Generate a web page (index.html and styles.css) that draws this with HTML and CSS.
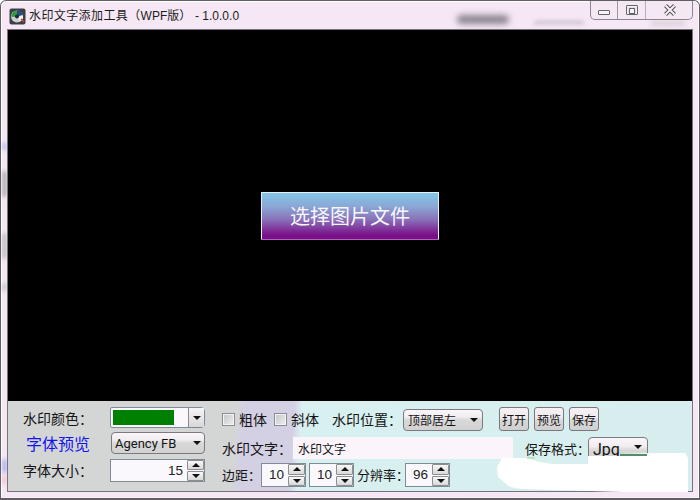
FILE: index.html
```html
<!DOCTYPE html>
<html lang="zh">
<head>
<meta charset="utf-8">
<title>水印文字添加工具</title>
<link rel="stylesheet" href="styles.css">
</head>
<body>
<div class="window">
  <div class="smudges">
    <span class="smudge s1"></span><span class="smudge s2"></span><span class="smudge s3"></span>
    <span class="smudge s4"></span><span class="smudge s5"></span><span class="smudge s6"></span>
    <span class="smudge s7"></span><span class="smudge s8"></span><span class="smudge s9"></span>
  </div>
  <header class="titlebar">
    <svg class="app-icon" width="17" height="17" viewBox="0 0 17 17">
      <rect x="0.5" y="0.5" width="16" height="16" rx="2" fill="#3c4044"/>
      <circle cx="8" cy="8.5" r="6" fill="#c9d0d4"/>
      <path d="M2.500 9a6 6 0 0 1 5.500-6.500V8.500z" fill="#2f9a3e"/>
      <path d="M8 2.500a6 6 0 0 1 6 4.500L8 8.500z" fill="#23507e"/>
      <path d="M8 8.500l6-1a6 6 0 0 1-3 6z" fill="#f2f2f2"/>
      <circle cx="8" cy="8.500" r="2" fill="#24282c"/>
      <path d="M12 11l3 3" stroke="#c84a3a" stroke-width="1.500"/>
    </svg>
    <span class="title-text"><span class="title-cjk">水印文字添加工具（</span>WPF版<span class="title-cjk">）</span> - 1.0.0.0</span>
    <div class="caption">
      <div class="cap-btn cap-min"><span class="glyph-min"></span></div>
      <div class="cap-btn cap-max"><span class="glyph-max"></span></div>
      <div class="cap-btn cap-close">
        <svg width="14" height="12" viewBox="0 0 14 12"><path d="M2.500 1.500l9 9M11.500 1.500l-9 9" stroke="#55515a" stroke-width="4" fill="none"/><path d="M2.500 1.500l9 9M11.500 1.500l-9 9" stroke="#f6f2f6" stroke-width="2" fill="none"/></svg>
      </div>
    </div>
  </header>
  <main class="client">
    <section class="stage">
      <button class="pick-btn">选择图片文件</button>
    </section>
    <section class="panel">
      <div class="col-left">
        <div class="left-row row-a">
          <label class="lbl lbl-left">水印颜色：</label>
          <div class="color-picker">
            <div class="swatch-box"><span class="swatch"></span></div>
            <div class="picker-arrow"><span class="tri-down"></span></div>
          </div>
        </div>
        <div class="left-row row-b">
          <span class="lbl lbl-left lbl-preview">字体预览</span>
          <div class="combo combo-font"><span class="combo-text latin">Agency FB</span><span class="tri-down"></span></div>
        </div>
        <div class="left-row row-c">
          <label class="lbl lbl-left">字体大小：</label>
          <div class="spin spin-size"><span class="spin-value">15</span><div class="spin-btns"><span class="spin-up"><i class="tri-up"></i></span><span class="spin-down"><i class="tri-down"></i></span></div></div>
        </div>
      </div>
      <div class="col-main">
        <div class="main-row row-1">
          <span class="check"></span><span class="lbl check-lbl">粗体</span>
          <span class="check check-2"></span><span class="lbl check-lbl">斜体</span>
          <label class="lbl pos-lbl">水印位置：</label>
          <div class="combo combo-pos"><span class="combo-text">顶部居左</span><span class="tri-down"></span></div>
          <div class="actions">
            <button class="act-btn">打开</button>
            <button class="act-btn">预览</button>
            <button class="act-btn">保存</button>
          </div>
        </div>
        <div class="main-row row-2">
          <label class="lbl">水印文字：</label>
          <div class="text-input">水印文字</div>
          <label class="lbl lbl-small fmt-lbl">保存格式：</label>
          <div class="combo combo-fmt"><span class="combo-text latin">Jpg</span><span class="tri-down"></span></div>
        </div>
        <div class="main-row row-3">
          <label class="lbl lbl-small margin-lbl">边距：</label>
          <div class="spin spin-num"><span class="spin-value">10</span><div class="spin-btns"><span class="spin-up"><i class="tri-up"></i></span><span class="spin-down"><i class="tri-down"></i></span></div></div>
          <div class="spin spin-num"><span class="spin-value">10</span><div class="spin-btns"><span class="spin-up"><i class="tri-up"></i></span><span class="spin-down"><i class="tri-down"></i></span></div></div>
          <label class="lbl lbl-small dpi-lbl">分辨率：</label>
          <div class="spin spin-num"><span class="spin-value">96</span><div class="spin-btns"><span class="spin-up"><i class="tri-up"></i></span><span class="spin-down"><i class="tri-down"></i></span></div></div>
        </div>
      </div>
    </section>
  </main>
  <svg class="blot" width="700" height="500" viewBox="0 0 700 500">
    <polygon points="502,458 527,458 540,462 552,464 588,464 588,456 620,456 622,454 655,453 685,453 688,458 688,492 623,492 560,490 522,489 510,487 498,477 497,467" fill="#fff"/>
    <path d="M527 458h8" stroke="#9fdc8c" fill="none"/>
    <path d="M620 455h27" stroke="#4f8f68" stroke-width="2" fill="none"/>
  </svg>
</div>
</body>
</html>
```
FILE: styles.css
```css
* { box-sizing: border-box; }
html, body { margin: 0; padding: 0; width: 700px; height: 500px; overflow: hidden; background: #fff; }
body { font-family: "Liberation Sans", "Noto Sans CJK SC", sans-serif; color: #111; }

.window {
  position: relative;
  width: 700px;
  height: 500px;
  display: flex;
  flex-direction: column;
  overflow: hidden;
  background: #f5e7f4;
  border: 1px solid #625e66;
  border-bottom-width: 2px;
  border-radius: 6px 6px 0 0;
  box-shadow: inset 1px 1px 0 #fff, inset -1px 0 0 #fff, inset 0 -1px 0 #f8eef8;
}

.smudges { position: absolute; inset: 0; pointer-events: none; }
.smudge { position: absolute; display: block; filter: blur(2px); border-radius: 6px; }
.s1 { left: 456px; top: 14px; width: 52px; height: 9px; background: #8a8390; filter: blur(3px); }
.s2 { left: 533px; top: 20px; width: 50px; height: 3px; background: #c2bbc8; }
.s3 { left: 650px; top: 20px; width: 34px; height: 5px; background: #dcd2dc; }
.s4 { left: 2px; top: 142px; width: 3px; height: 7px; background: #9aa6e8; }
.s5 { left: 2px; top: 170px; width: 3px; height: 26px; background: #8d8890; }
.s6 { left: 2px; top: 232px; width: 3px; height: 26px; background: #a8a4ac; }
.s7 { left: 2px; top: 282px; width: 3px; height: 8px; background: #b0acb4; }
.s8 { left: 2px; top: 458px; width: 3px; height: 14px; background: #8e90e8; }
.s9 { left: 2px; top: 474px; width: 3px; height: 10px; background: #efb4c0; }

.titlebar {
  position: relative;
  flex: 0 0 28px;
  display: flex;
  align-items: flex-start;
  padding: 7px 0 0 8px;
}
.app-icon { flex: none; }
.title-text {
  margin: 1px 0 0 3px;
  font-size: 12px;
  line-height: 14px;
  color: #1c1c20;
  white-space: nowrap;
}
.title-cjk { letter-spacing: 0.4px; }

.caption {
  position: absolute;
  top: -1px;
  right: 6px;
  width: 103px;
  height: 20px;
  display: flex;
  border: 1px solid #8b8690;
  border-top: 0;
  border-radius: 0 0 5px 5px;
  background: #f4e8f5;
}
.cap-btn { display: flex; align-items: center; justify-content: center; }
.cap-min { width: 27px; border-right: 1px solid #9b96a0; }
.cap-max { width: 28px; border-right: 1px solid #b5b0ba; }
.cap-close { flex: 1; padding-left: 1px; }
.glyph-min { display: block; width: 12px; height: 5px; margin-top: 5px; background: #f7f4f8; border: 1px solid #67636c; border-radius: 1px; }
.glyph-max { display: block; width: 12px; height: 10px; border: 1px solid #67636c; background: #e6dfe8; box-shadow: inset 0 0 0 1px #f4f0f5; border-radius: 1px; position: relative; }
.glyph-max::after { content: ""; display: block; margin: 2px; height: 4px; border: 1px solid #67636c; background: #f7f4f8; }

.client {
  flex: 1;
  display: flex;
  flex-direction: column;
  margin: 0 6px 6px 6px;
  border: 1px solid #77737c;
  min-height: 0;
  position: relative;
}

.stage {
  flex: 1;
  background: #000;
  display: flex;
  align-items: center;
  justify-content: center;
}
.pick-btn {
  width: 178px;
  height: 48px;
  padding: 0;
  border: 1px solid #e6f0fa;
  border-bottom-color: #b060c0;
  border-radius: 1px;
  color: #f6f6ff;
  font-family: "Noto Sans CJK SC", sans-serif;
  font-size: 20px;
  background: linear-gradient(180deg, #84c6ea 0%, #8aa6d4 30%, #8a70b8 58%, #7a0f88 92%, #7a0f88 100%);
}

.panel {
  flex: 0 0 90px;
  display: flex;
  padding: 6px 0 0 15px;
  background: linear-gradient(94deg, #d4d6d6 0, #d4d6d6 228px, #d4d0e4 236px, #d4d0e4 286px, #d8f0f0 294px, #d8eeee 100%);
}

.lbl { font-size: 14px; line-height: 20px; white-space: nowrap; color: #141414; font-family: "Noto Sans CJK SC", sans-serif; }
.lbl-small { font-size: 13px; }

.col-left { flex: 0 0 182px; display: flex; flex-direction: column; }
.left-row { display: flex; align-items: center; justify-content: space-between; }
.row-a { height: 21px; }
.row-b { height: 22px; margin-top: 4px; }
.row-c { height: 22px; margin-top: 5px; }
.lbl-preview { color: #1414f0; font-size: 16px; margin-left: 3px; }

.color-picker { width: 95px; height: 21px; display: flex; border: 1px solid #7f8a9a; border-radius: 2px 4px 4px 2px; background: #fbf8fc; }
.swatch-box { flex: 1; padding: 2px; }
.swatch { display: block; width: 61px; height: 15px; background: #008000; }
.picker-arrow { width: 16px; display: flex; align-items: center; justify-content: center; border-left: 1px solid #8a8a8a; background: linear-gradient(#f8f4f8, #d8d8d8); }

.tri-down { display: block; width: 0; height: 0; border-left: 4px solid transparent; border-right: 4px solid transparent; border-top: 4px solid #111; flex: none; }
.tri-up { display: block; width: 0; height: 0; border-left: 4px solid transparent; border-right: 4px solid transparent; border-bottom: 4px solid #111; flex: none; }

.combo {
  display: flex;
  align-items: center;
  justify-content: space-between;
  border: 1px solid #7a7a80;
  border-radius: 4px;
  background: linear-gradient(#fcf6fa 0, #f0ecf0 35%, #d8d8d8 50%, #d2d2d2 100%);
  padding: 0 3px 0 3px;
}
.combo-text { white-space: nowrap; font-family: "Noto Sans CJK SC", sans-serif; font-size: 12px; line-height: 18px; color: #141414; }
.combo-text.latin { font-family: Roboto, sans-serif; font-size: 13px; padding-top: 1px; }
.combo-font { width: 94px; height: 22px; }
.combo-pos { width: 80px; height: 22px; margin-left: 1px; padding: 0 4px; }
.combo-fmt { width: 60px; height: 26px; margin-left: 0; align-self: flex-start; padding: 0 5px 0 4px; align-items: flex-start; }
.combo-fmt .combo-text { font-size: 16px; line-height: 21px; }
.combo-fmt .tri-down { margin-top: 7px; }

.spin { display: flex; align-items: stretch; border: 1px solid #7f8c96; background: #fbf8fd; }
.spin-size { width: 95px; height: 23px; }
.spin-num { width: 45px; height: 24px; }
.spin-value { flex: 1; text-align: right; font-size: 13.500px; line-height: 21px; padding-right: 4px; color: #222; }
.spin-btns { flex: 0 0 17px; display: flex; flex-direction: column; gap: 1px; background: #fbf8fd; }
.spin-up, .spin-down { flex: 1; display: flex; align-items: center; justify-content: center; border: 1px solid #8d8d92; background: linear-gradient(#f8f8f8, #d8d8d8); border-radius: 1px; }

.col-main { flex: 1; display: flex; flex-direction: column; padding-left: 17px; }
.main-row { display: flex; align-items: center; }
.row-1 { height: 24px; }
.row-2 { height: 23px; margin-top: 6px; align-items: flex-start; }
.row-3 { height: 24px; margin-top: 3px; }

.check { flex: none; width: 13px; height: 13px; border: 1px solid #8a8e92; background: linear-gradient(135deg, #c4c6c8, #eeeeee); box-shadow: inset 0 0 0 1px #f4f4f4; }
.check-lbl { margin-left: 4px; }
.check-2 { margin-left: 7px; }
.pos-lbl { margin-left: 13px; }
.combo-pos { align-self: flex-end; }

.actions { display: flex; gap: 5px; margin-left: 16px; }
.act-btn {
  width: 30px;
  height: 24px;
  padding: 0;
  border: 1px solid #77777c;
  border-radius: 3px;
  background: linear-gradient(#f6f0f4 0, #eeeaee 45%, #d8d8d8 55%, #d0d0d0 100%);
  color: #141414;
  font-family: "Noto Sans CJK SC", sans-serif;
  font-size: 12px;
}

.row-2 .lbl { line-height: 22px; }
.text-input {
  width: 220px;
  height: 22px;
  margin-left: 1px;
  padding-left: 5px;
  background: #fbf5fb;
  font-family: "Noto Sans CJK SC", sans-serif;
  font-size: 12px;
  line-height: 24px;
  color: #141414;
}
.fmt-lbl { margin-left: 12px; width: 63px; }
.row-2 .fmt-lbl { line-height: 24px; }
.margin-lbl { width: 39px; }
.spin-num + .spin-num { margin-left: 3px; }
.dpi-lbl { margin-left: 3px; width: 48px; }

.blot { position: absolute; left: -1px; top: -1px; pointer-events: none; }
```
